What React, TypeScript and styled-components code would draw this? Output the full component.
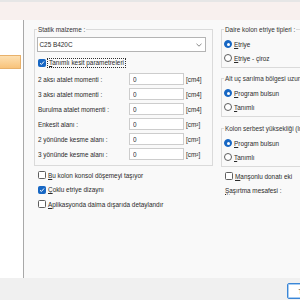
import React from "react";
import styled, { createGlobalStyle } from "styled-components";

const GlobalStyle = createGlobalStyle`
  html, body { margin: 0; padding: 0; width: 300px; height: 300px; overflow: hidden; background: #f9f9f9; }
  * { box-sizing: border-box; }
  body {
    font-family: "Liberation Sans", Arial, sans-serif;
    font-size: 6.4px;
    line-height: 9px;
    color: #2a2a2a;
  }
`;

const Window = styled.div`
  display: flex;
  flex-direction: column;
  width: 300px;
  height: 300px;
  overflow: hidden;
`;

const TopStrip = styled.div`
  flex: none;
  height: 2px;
  background: #e6e6e6;
`;

const HeaderBand = styled.div`
  flex: none;
  height: 18px;
  background: #f8f0ee;
`;

const Main = styled.div`
  flex: none;
  display: flex;
  height: 258px;
  background: #f9f9f9;
`;

const Sidebar = styled.div`
  flex: none;
  width: 24px;
  background: #ffffff;
  border-right: 1px solid #a9a9a9;
  padding-top: 35px;
`;

const SidebarItem = styled.div`
  width: 21px;
  height: 14px;
  background: linear-gradient(#fde0b2, #f8c37b);
  border: 1px solid #e8b16b;
  border-left: none;
`;

const Content = styled.div`
  flex: 1;
  display: flex;
  align-items: flex-start;
  gap: 8px;
  padding: 5px 0 0 10px;
  overflow: hidden;
`;

const Column = styled.div<{ $width: number }>`
  flex: none;
  width: ${(p) => p.$width}px;
  display: flex;
  flex-direction: column;
`;

const GroupBox = styled.fieldset<{ $mt?: number; $pb?: number }>`
  margin: ${(p) => p.$mt ?? 0}px 0 0 0;
  padding: 3px 6px ${(p) => p.$pb ?? 2}px 2px;
  border: 1px solid #dadada;
  min-width: 0;
`;

const Legend = styled.legend`
  padding: 0 1px;
  line-height: 9px;
  color: #333;
  white-space: nowrap;
`;

const Stack = styled.div<{ $gap?: number }>`
  display: flex;
  flex-direction: column;
  gap: ${(p) => p.$gap ?? 0}px;
`;

const ComboBox = styled.div`
  display: flex;
  align-items: center;
  justify-content: space-between;
  width: 169px;
  height: 15px;
  padding: 0 3px 0 1.5px;
  background: #fff;
  border: 1px solid #b4b4b4;
`;

const CheckRow = styled.label<{ $mt?: number; $h?: number; $pl?: number; $gap?: number }>`
  display: flex;
  align-items: center;
  gap: ${(p) => p.$gap ?? 2}px;
  height: ${(p) => p.$h ?? 14}px;
  margin-top: ${(p) => p.$mt ?? 0}px;
  padding-left: ${(p) => p.$pl ?? 0}px;
  white-space: nowrap;
`;

const Box = styled.span<{ $checked?: boolean }>`
  flex: none;
  display: inline-flex;
  align-items: center;
  justify-content: center;
  width: 8px;
  height: 8px;
  border-radius: 1.5px;
  border: 1px solid ${(p) => (p.$checked ? "#1767c4" : "#5e5e5e")};
  background: ${(p) => (p.$checked ? "#1767c4" : "#ffffff")};
`;

const FocusLabel = styled.span`
  border: 1px dotted #303030;
  padding: 0 1px;
  line-height: 8px;
`;

const Radio = styled.span<{ $checked?: boolean }>`
  flex: none;
  display: inline-flex;
  align-items: center;
  justify-content: center;
  width: 8px;
  height: 8px;
  border-radius: 50%;
  border: 1px solid ${(p) => (p.$checked ? "#1767c4" : "#5e5e5e")};
  background: ${(p) => (p.$checked ? "#1767c4" : "#ffffff")};
  &::after {
    content: "";
    display: ${(p) => (p.$checked ? "block" : "none")};
    width: 3px;
    height: 3px;
    border-radius: 50%;
    background: #fff;
  }
`;

const Key = styled.span`
  text-decoration: underline;
`;

const ParamRow = styled.div`
  display: grid;
  grid-template-columns: 90px 55px auto;
  column-gap: 2px;
  align-items: center;
  height: 12px;
`;

const ParamLabel = styled.span`
  padding-left: 1px;
  white-space: nowrap;
`;

const TextInput = styled.input`
  width: 55px;
  height: 12px;
  margin: 0;
  padding: 0 0 0 3px;
  border: 1px solid #cdcdcd;
  background: #fff;
  font-family: inherit;
  font-size: 6.4px;
  color: #2a2a2a;
  outline: none;
`;

const Unit = styled.span`
  white-space: nowrap;
`;

const PlainRow = styled.div`
  display: flex;
  align-items: center;
  height: 14px;
  padding-left: 4px;
  white-space: nowrap;
`;

const BottomBar = styled.div`
  flex: none;
  height: 22px;
  background: #f0f0f0;
  display: flex;
  align-items: flex-start;
  padding: 5px 0 0 287px;
  overflow: hidden;
`;

const Button = styled.button`
  flex: none;
  width: 44px;
  height: 16px;
  padding: 0;
  border: 1px solid #3b86d6;
  box-shadow: inset 0 0 0 1px #a8cdf2;
  border-radius: 2px;
  background: #fff;
  font-family: inherit;
  font-size: 6.4px;
  color: #2a2a2a;
`;

const Check = () => (
  <svg width="6" height="6" viewBox="0 0 6 6">
    <path d="M1 3.2 L2.4 4.5 L5 1.5" fill="none" stroke="#fff" strokeWidth="1" />
  </svg>
);

const Chevron = () => (
  <svg width="6" height="4" viewBox="0 0 6 4">
    <path d="M0.5 0.8 L3 3.2 L5.5 0.8" fill="none" stroke="#6a6a6a" strokeWidth="0.8" />
  </svg>
);

const params: { label: string; unit: React.ReactNode }[] = [
  { label: "2 aksı atalet momenti :", unit: "[cm4]" },
  { label: "3 aksı atalet momenti :", unit: "[cm4]" },
  { label: "Burulma atalet momenti :", unit: "[cm4]" },
  { label: "Enkesit alanı :", unit: "[cm²]" },
  { label: "2 yönünde kesme alanı :", unit: "[cm²]" },
  { label: "3 yönünde kesme alanı :", unit: "[cm²]" },
];

type RadioOpt = { key: string; rest: string; checked?: boolean };

const RadioGroup = ({ title, options, mt }: { title: string; options: RadioOpt[]; mt?: number }) => (
  <GroupBox $mt={mt}>
    <Legend>{title}</Legend>
    <Stack>
      {options.map((o) => (
        <CheckRow key={o.key + o.rest} $gap={2}>
          <Radio $checked={o.checked} />
          <span>
            <Key>{o.key}</Key>
            {o.rest}
          </span>
        </CheckRow>
      ))}
    </Stack>
  </GroupBox>
);

export default function App() {
  return (
    <>
      <GlobalStyle />
      <Window>
        <TopStrip />
        <HeaderBand />
        <Main>
          <Sidebar>
            <SidebarItem />
          </Sidebar>
          <Content>
            <Column $width={179}>
              <GroupBox $pb={5}>
                <Legend>Statik malzeme :</Legend>
                <ComboBox>
                  <span>C25 B420C</span>
                  <Chevron />
                </ComboBox>
                <CheckRow $mt={6} $h={10} $pl={1} $gap={1}>
                  <Box $checked>
                    <Check />
                  </Box>
                  <FocusLabel>
                    <Key>T</Key>anımlı kesit parametreleri
                  </FocusLabel>
                </CheckRow>
                <Stack $gap={3} style={{ marginTop: 5 }}>
                  {params.map((p) => (
                    <ParamRow key={p.label}>
                      <ParamLabel>{p.label}</ParamLabel>
                      <TextInput readOnly value="0" />
                      <Unit>{p.unit}</Unit>
                    </ParamRow>
                  ))}
                </Stack>
              </GroupBox>
              <Stack style={{ marginTop: 2 }}>
                <CheckRow $h={14.5} $pl={4}>
                  <Box />
                  <span>
                    <Key>B</Key>u kolon konsol döşemeyi taşıyor
                  </span>
                </CheckRow>
                <CheckRow $h={14.5} $pl={4}>
                  <Box $checked>
                    <Check />
                  </Box>
                  <span>
                    <Key>Ç</Key>oklu etriye dizaynı
                  </span>
                </CheckRow>
                <CheckRow $h={14.5} $pl={4}>
                  <Box />
                  <span>
                    <Key>A</Key>plikasyonda daima dışarıda detaylandır
                  </span>
                </CheckRow>
              </Stack>
            </Column>
            <Column $width={130}>
              <RadioGroup
                title="Daire kolon etriye tipleri :"
                options={[
                  { key: "E", rest: "triye", checked: true },
                  { key: "E", rest: "triye - çiroz" },
                ]}
              />
              <RadioGroup
                mt={6}
                title="Alt uç sarılma bölgesi uzunluğu :"
                options={[
                  { key: "P", rest: "rogram bulsun", checked: true },
                  { key: "T", rest: "anımlı" },
                ]}
              />
              <RadioGroup
                mt={7}
                title="Kolon serbest yüksekliği (ln) :"
                options={[
                  { key: "P", rest: "rogram bulsun", checked: true },
                  { key: "T", rest: "anımlı" },
                ]}
              />
              <CheckRow $mt={2} $pl={4}>
                <Box />
                <span>
                  <Key>M</Key>anşonlu donatı eki
                </span>
              </CheckRow>
              <PlainRow>
                <span>
                  <Key>Ş</Key>aşırtma mesafesi :
                </span>
              </PlainRow>
            </Column>
          </Content>
        </Main>
        <BottomBar>
          <Button>Tamam</Button>
        </BottomBar>
      </Window>
    </>
  );
}
